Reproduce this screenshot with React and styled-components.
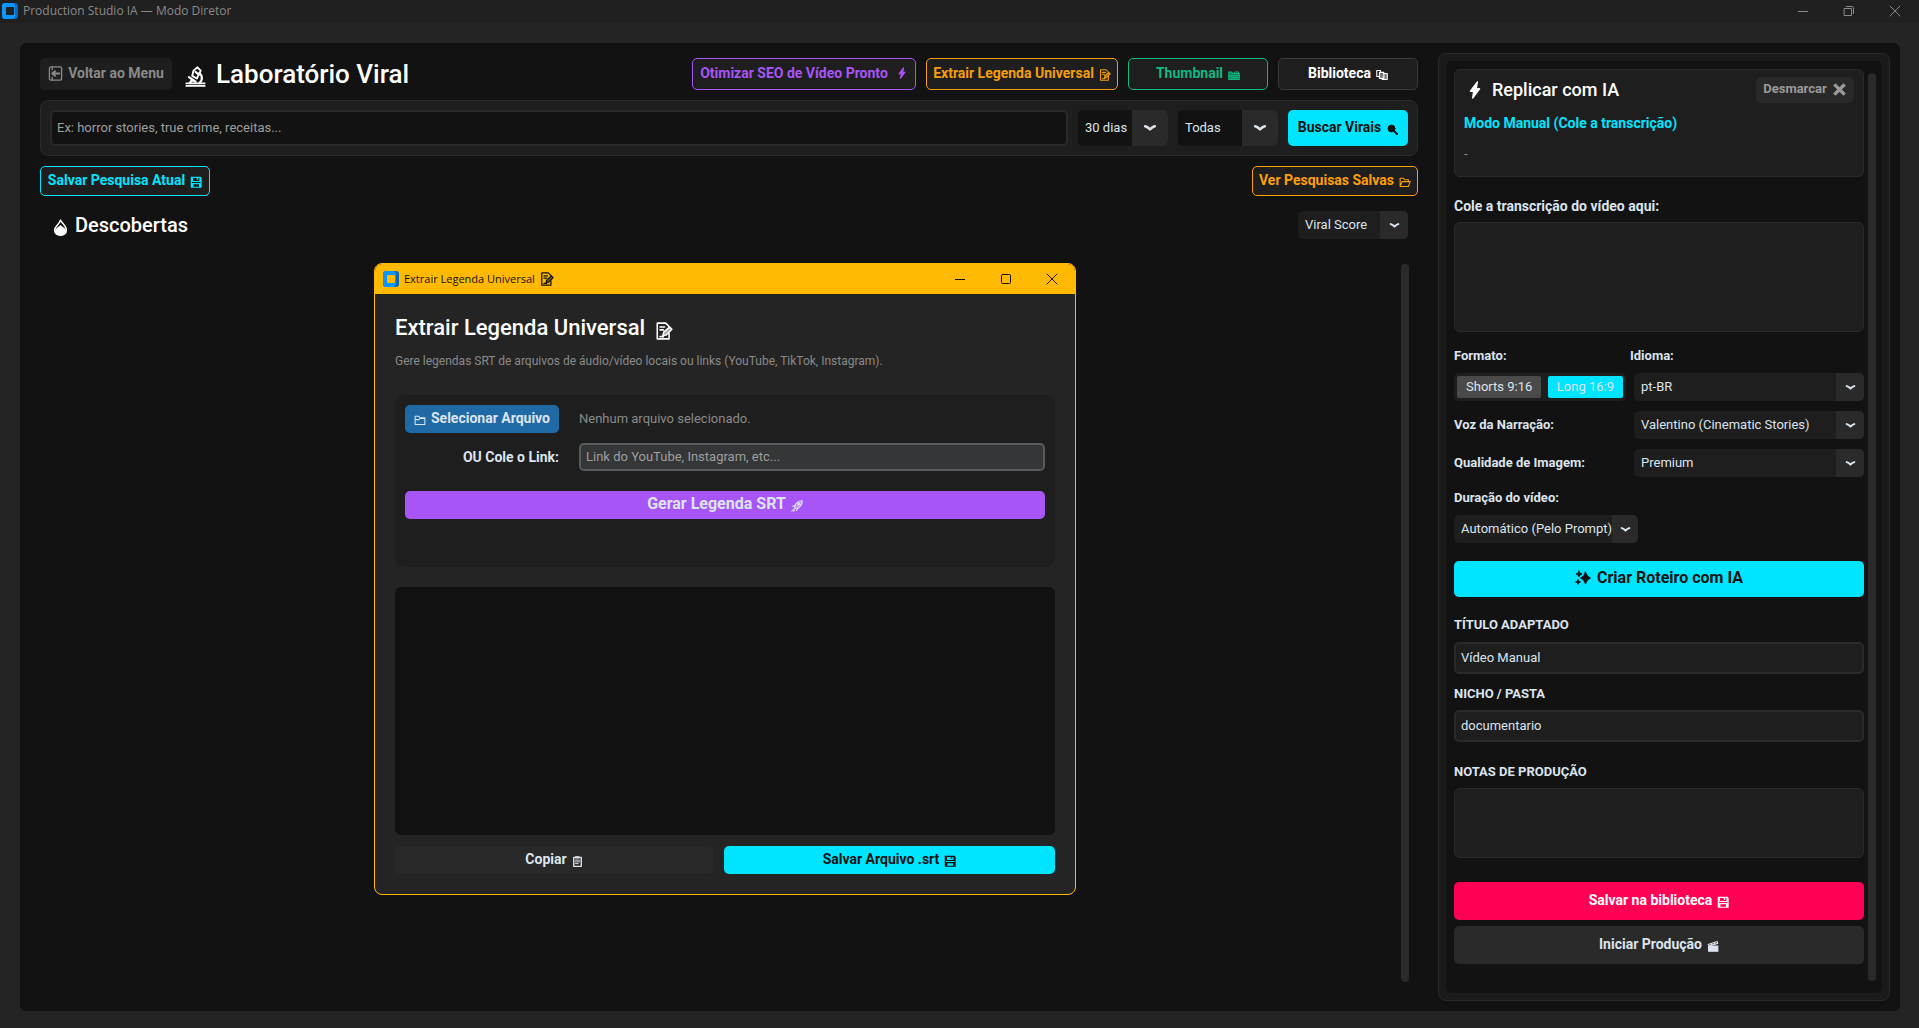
import React from "react";
import styled, { createGlobalStyle } from "styled-components";

const c = {
  cyan: "#00e5ff",
  orange: "#ff9f0a",
  amber: "#f59e0b",
  green: "#10b981",
  purple: "#a855f7",
  pink: "#ff0055",
  yellow: "#ffb900",
  blue: "#1f6aa5",
  page: "#242424",
  base: "#121212",
  card: "#1e1e1e",
  line: "#2a2a2a",
  text: "#dce4ee",
  muted: "#8a8a8a",
};

const GlobalStyle = createGlobalStyle`
  *, *::before, *::after { box-sizing: border-box; }
  html, body { margin: 0; background: ${c.page}; }
  body, button, input, select, textarea {
    font-family: Roboto, "Liberation Sans", sans-serif;
    font-size: 13px;
    line-height: 16px;
    color: ${c.text};
  }
  button { cursor: pointer; }
`;

/* ---------- icons ---------- */

const Glyph = styled.svg`
  flex: none;
  display: block;
  width: ${(p) => p.$size || 12}px;
  height: ${(p) => p.$size || 12}px;
  margin-top: ${(p) => p.$drop || 0}px;
  fill: none;
  stroke: currentColor;
  stroke-width: 1.4;
  stroke-linecap: round;
  stroke-linejoin: round;
`;

const shapes = {
  back: (
    <>
      <rect x="1.500" y="1" width="13" height="14" rx="1.500" />
      <path d="M12 8H4.500M7.500 5.500L4.500 8L7.500 10.500" strokeWidth="2" />
      <path d="M4.500 1v3M4.500 12v3" />
    </>
  ),
  microscope: (
    <>
      <path d="M1 15.200h14M1 13.200h14" />
      <path d="M6.500 3.500L9.500 1l2.500 2.500L9 9.500L5.500 7.500Z" />
      <path d="M8 4.500l2.500 2M11 5.500c2.500 2 2.500 5.500 0 7.500M3 8.500l5 3.500M4 13c0-2 3-2.500 4-1" strokeWidth="1.700" />
    </>
  ),
  fire: (
    <>
      <path d="M8 1C9 4 13.500 6 13.500 10.500C13.500 13.500 11 15.200 8 15.200S2.500 13.500 2.500 10.500C2.500 7 7 5 8 1Z" />
      <path d="M8 6.500C10 8.500 12.500 9 12.500 11.500C12.500 14 10 14.800 8 14.800S3.500 14 3.500 11.500C3.500 9 6 8.500 8 6.500Z" fill="currentColor" />
    </>
  ),
  bolt: <path d="M10 1L4 9H7L6 15L12 7H9Z" fill="currentColor" />,
  memo: (
    <>
      <path d="M12.500 10v5H2V1h7.500l3 3v1" />
      <path d="M4.500 4.500h4M4.500 7h3M4.500 13h3" />
      <path d="M7 12l.8-3L13 4.500l2 2L10 11.500Z" fill="currentColor" fillOpacity=".6" />
    </>
  ),
  dividers: (
    <>
      <path d="M1 14V4h4l1.500 2H15v8Z" fill="currentColor" fillOpacity=".65" />
      <path d="M8 6l1.500-2h4.500v2M1 9h14M4 11.500h8" />
    </>
  ),
  books: (
    <>
      <path d="M1 2h5v2M1 2v8h2.500" />
      <path d="M4.500 4.500h6v8h-6Z" fill="currentColor" fillOpacity=".4" />
      <path d="M10.500 6H15v8H8" fill="currentColor" fillOpacity=".4" />
    </>
  ),
  search: (
    <>
      <circle cx="6.500" cy="6.500" r="5" fill="currentColor" />
      <path d="M10 10l4.500 4.500" strokeWidth="3" />
    </>
  ),
  openFolder: <path d="M1.500 14V3h4.500l1.500 2h5v2.500M1.500 14L4 7.500h11L12.500 14Z" />,
  folder: <path d="M1.500 14V3h5l1.500 2h6.500v9ZM1.500 7.500h5l1.500-1.500h6.500" />,
  floppy: (
    <path
      d="M1 1h13l1.500 1.500v13H1ZM4 2.500v4h8.500v-4h-1.500v2.500h-2v-2.500ZM2.500 8v1.200h11.500V8ZM4.500 11v3.200h7.500V11Z"
      fill="currentColor"
      fillRule="evenodd"
      stroke="none"
    />
  ),
  rocket: (
    <>
      <path d="M15 1C10 1 6 4 4.500 9.500L7 12C12 10 15 6 15 1Z" fill="currentColor" fillOpacity=".45" />
      <path d="M5 7L2 8.500M9 11l-1.500 3M1 15l3.500-3.500M3.500 15l1.500-1.500" />
      <circle cx="10.500" cy="5.500" r="1.200" />
    </>
  ),
  clipboard: (
    <>
      <rect x="2.500" y="2" width="11" height="13" strokeWidth="2" />
      <path d="M5.500 1h5v2h-5ZM5 6h6M5 8.500h6M5 11h4" />
    </>
  ),
  sparkles: (
    <g fill="currentColor" strokeWidth=".8">
      <path d="M10.500 2L12.500 6L15.500 8L12.500 10L10.500 14L8.500 10L5.500 8L8.500 6Z" />
      <path d="M4 1l1 2L7 4l-2 1L4 7l-1-2L1 4l2-1Z" />
      <path d="M3 9.500l.8 1.700 1.700.8-1.700.8L3 14.500l-.8-1.700L.5 12l1.700-.8Z" />
    </g>
  ),
  clapper: (
    <>
      <path d="M2 8h12.500v7H2Z" fill="currentColor" />
      <path d="M1.500 6L13.500 2l.8 2.500L2 8" />
      <path d="M5 5l1.500 1.500M9 3.500l1.500 1.500" />
    </>
  ),
  cross: <path d="M2.500 2.500l11 11M13.500 2.500L2.500 13.500" strokeWidth="3.600" strokeLinecap="butt" />,
  chevron: <path d="M2.500 6Q5.500 7 8 9.500Q10.500 7 13.500 6" strokeWidth="3" />,
  minimize: <path d="M3 8.500h10" strokeLinecap="butt" />,
  maximize: <rect x="3.500" y="3.500" width="9" height="9" rx="1" />,
  restore: <path d="M3.500 5.500h7v7h-7ZM5.500 3.500h6q1 0 1 1v6" />,
  close: <path d="M3 3l10 10M13 3L3 13" />,
};

const Icon = ({ name, size, drop }) => (
  <Glyph viewBox="0 0 16 16" aria-hidden="true" $size={size} $drop={drop}>
    {shapes[name]}
  </Glyph>
);

const Logo = ({ size, hole }) => (
  <svg width={size} height={size} viewBox="0 0 16 16" aria-hidden="true">
    <rect width="16" height="16" rx="3" fill="#0a66b8" />
    <rect width="13" height="16" rx="3" fill="#0a95ff" />
    <rect x="4" y="4" width="8" height="8" rx="1" fill={hole} />
  </svg>
);

/* ---------- shared parts ---------- */

const Button = styled.button`
  display: flex;
  align-items: center;
  justify-content: center;
  gap: ${(p) => p.$gap || 5}px;
  height: ${(p) => p.$h || 28}px;
  min-width: ${(p) => (p.$w ? `${p.$w}px` : "0")};
  padding: 0 5px 2px;
  border: ${(p) => (p.$line ? `1px solid ${p.$line}` : "0")};
  border-radius: 5px;
  background: ${(p) => p.$bg || c.card};
  color: ${(p) => p.$color || c.text};
  font-size: ${(p) => p.$font || 14}px;
  font-weight: 700;
  white-space: nowrap;
`;

const WindowButton = styled.button`
  display: grid;
  place-items: center;
  width: 46px;
  height: 100%;
  padding: 0;
  border: 0;
  background: none;
  color: inherit;
  svg { stroke-width: 1; }
`;

const WindowButtons = styled.div`
  display: flex;
  height: 100%;
  margin-left: auto;
`;

const SelectBox = styled.div`
  display: grid;
  grid-template-columns: minmax(0, 1fr) ${(p) => p.$arrow || 28}px;
  width: ${(p) => (p.$w ? `${p.$w}px` : "100%")};
  height: ${(p) => p.$h || 28}px;
  border-radius: 5px;
  background: ${(p) => p.$bg || c.card};
  overflow: hidden;
`;

const NativeSelect = styled.select`
  grid-area: 1 / 1 / 2 / 3;
  appearance: none;
  width: 100%;
  padding: 0 20px 0 7px;
  border: 0;
  background: none;
  font-size: 13px;
  option { background: ${c.card}; }
`;

const SelectArrow = styled.span`
  grid-area: 1 / 2 / 2 / 3;
  display: grid;
  place-items: center;
  background: ${c.line};
  pointer-events: none;
`;

const Select = ({ id, label, value, ...box }) => (
  <SelectBox {...box}>
    <NativeSelect id={id} aria-label={label} defaultValue={value}>
      <option>{value}</option>
    </NativeSelect>
    <SelectArrow>
      <Icon name="chevron" size={box.$h > 30 ? 14 : 11} />
    </SelectArrow>
  </SelectBox>
);

const Input = styled.input`
  width: 100%;
  min-width: 0;
  height: ${(p) => p.$h || 32}px;
  padding: 0 5px 1px;
  border: 2px solid ${(p) => p.$line || c.line};
  border-radius: 5px;
  background: ${(p) => p.$bg || c.card};
  color: ${c.text};
  font-size: 13px;
  &::placeholder { color: #9e9e9e; opacity: 1; }
`;

const TextArea = styled.textarea`
  display: block;
  width: 100%;
  height: ${(p) => p.$h}px;
  padding: 6px;
  border: 1px solid ${(p) => p.$line || c.line};
  border-radius: 6px;
  background: ${(p) => p.$bg || c.card};
  resize: none;
`;

const ScrollTrack = styled.div`
  width: 8px;
  border-radius: 4px;
  background: ${c.line};
`;

/* ---------- main window ---------- */

const Shell = styled.div`
  display: flex;
  flex-direction: column;
  min-height: 100vh;
`;

const TitleBar = styled.header`
  display: flex;
  align-items: center;
  gap: 5px;
  height: 23px;
  padding: 0 1px 1px 2px;
  background: #202020;
  color: #8a8a8a;
  font-family: "Open Sans", "Noto Sans", sans-serif;
  font-size: 12px;
`;

const Frame = styled.div`
  flex: 1;
  display: grid;
  grid-template-columns: minmax(0, 1fr) 452px;
  gap: 20px;
  margin: 20px 19px 17px 20px;
  padding: 10px 10px 10px 20px;
  border-radius: 6px;
  background: ${c.base};
`;

const Lab = styled.main`
  display: flex;
  flex-direction: column;
  gap: 10px;
  padding-top: 5px;
`;

const Row = styled.div`
  display: flex;
  align-items: center;
  gap: 10px;
`;

const Heading = styled.h1`
  display: flex;
  align-items: center;
  gap: ${(p) => p.$gap || 10}px;
  margin: 0;
  color: #fff;
  font-size: ${(p) => p.$font || 26}px;
  font-weight: 500;
  line-height: 28px;
  white-space: nowrap;
`;

const PageTitle = styled(Heading)`
  padding-left: 3px;
`;

const HeadActions = styled(Row)`
  margin-left: auto;
`;

const SearchBar = styled.form`
  display: flex;
  gap: 10px;
  padding: 9px;
  border: 1px solid ${c.line};
  border-radius: 8px;
  background: ${c.card};
`;

const Between = styled(Row)`
  justify-content: space-between;
`;

const Discoveries = styled(Between)`
  padding: 5px 10px 0 12px;
`;

const Results = styled.section`
  flex: 1;
  display: flex;
  justify-content: flex-end;
  padding: 15px 9px 19px 0;
`;

/* ---------- side panel ---------- */

const Side = styled.aside`
  padding: 7px;
  border: 1px solid ${c.line};
  border-radius: 8px;
  background: #1a1a1a;
`;

const SideInner = styled.div`
  display: flex;
  gap: 4px;
  height: 100%;
  padding: 8px 6px 12px 8px;
  border-radius: 6px;
  background: ${c.base};
`;

const SideTrack = styled(ScrollTrack)`
  margin-top: 4px;
`;

const Fields = styled.div`
  flex: 1;
  min-width: 0;
`;

const ModeCard = styled.section`
  height: 108px;
  padding: 6px 9px;
  border: 1px solid ${c.line};
  border-radius: 6px;
  background: ${c.card};
`;

const ModeTitle = styled(Heading)`
  padding-left: 2px;
`;

const ModeName = styled.p`
  margin: 11px 0 15px;
  color: ${c.cyan};
  font-size: 14px;
  font-weight: 700;
`;

const ModeNote = styled.p`
  margin: 0;
  color: ${c.muted};
`;

const Label = styled.label`
  display: block;
  margin-top: ${(p) => p.$top || 0}px;
  margin-bottom: ${(p) => p.$bottom || 0}px;
  font-size: ${(p) => p.$font || 13}px;
  font-weight: 700;
`;

const FormatGrid = styled.div`
  display: grid;
  grid-template-columns: 172px minmax(0, 1fr);
  grid-template-rows: 14px;
  column-gap: 8px;
  row-gap: 10px;
  align-items: center;
  margin-top: 17px;
`;

const LanguageLabel = styled(Label)`
  margin-left: -4px;
`;

const Segments = styled.div`
  display: flex;
  justify-content: space-between;
  padding: 3px;
  border-radius: 5px;
  background: ${c.card};
`;

const Segment = styled.button`
  height: 22px;
  padding: 0 9px;
  border: 0;
  border-radius: 2px;
  background: ${(p) => (p.$on ? c.cyan : "#4a4a4a")};
`;

const Stack = styled.div`
  display: grid;
  gap: 6px;
  margin-top: ${(p) => p.$top || 0}px;
`;

/* ---------- caption dialog ---------- */

const Dialog = styled.section`
  position: absolute;
  top: 263px;
  left: 374px;
  width: 702px;
  border: 1px solid ${c.yellow};
  border-radius: 8px;
  background: ${c.page};
  overflow: hidden;
`;

const DialogBar = styled.header`
  display: flex;
  align-items: center;
  gap: 5px;
  height: 30px;
  padding: 0 0 1px 8px;
  background: ${c.yellow};
  color: #111;
  font-family: "Open Sans", "Noto Sans", sans-serif;
  font-size: 11px;
`;

const DialogBody = styled.div`
  padding: 20px;
`;

const Hint = styled.p`
  margin: ${(p) => p.$m || "0"};
  color: ${c.muted};
  font-size: ${(p) => p.$font || 13}px;
`;

const SourcePanel = styled.div`
  display: grid;
  grid-template-columns: 154px minmax(0, 1fr);
  column-gap: 20px;
  row-gap: 10px;
  align-items: center;
  height: 172px;
  align-content: start;
  padding: 10px;
  margin-bottom: 20px;
  border-radius: 10px;
  background: ${c.card};
`;

const LinkLabel = styled(Label)`
  text-align: right;
`;

const Wide = styled.div`
  display: grid;
  grid-column: 1 / -1;
  margin-top: 10px;
`;

const DialogActions = styled.div`
  display: grid;
  grid-template-columns: 318px minmax(0, 1fr);
  gap: 11px;
  margin-top: 11px;
`;

function SidePanel() {
  return (
    <Side>
      <SideInner>
        <Fields>
          <ModeCard>
            <Between>
              <ModeTitle as="h2" $font={18} $gap={8}>
                <Icon name="bolt" size={18} /> Replicar com IA
              </ModeTitle>
              <Button $h={26} $font={13} $w={98} $bg="#292929" $color="#9a9a9a">
                Desmarcar <Icon name="cross" size={15} />
              </Button>
            </Between>
            <ModeName>Modo Manual (Cole a transcrição)</ModeName>
            <ModeNote>-</ModeNote>
          </ModeCard>

          <Label htmlFor="transcript" $font={14} $top={21} $bottom={8}>Cole a transcrição do vídeo aqui:</Label>
          <TextArea id="transcript" $h={110} />

          <FormatGrid>
            <Label as="span">Formato:</Label>
            <LanguageLabel htmlFor="language">Idioma:</LanguageLabel>
            <Segments>
              <Segment type="button">Shorts 9:16</Segment>
              <Segment type="button" $on>Long 16:9</Segment>
            </Segments>
            <Select id="language" value="pt-BR" />
            <Label htmlFor="voice">Voz da Narração:</Label>
            <Select id="voice" value="Valentino (Cinematic Stories)" />
            <Label htmlFor="quality">Qualidade de Imagem:</Label>
            <Select id="quality" value="Premium" />
          </FormatGrid>

          <Label htmlFor="duration" $top={13} $bottom={9}>Duração do vídeo:</Label>
          <Select id="duration" value="Automático (Pelo Prompt)" $w={184} $arrow={26} />

          <Stack $top={18}>
            <Button $h={36} $bg={c.cyan} $color={c.base} $font={16} $gap={6}>
              <Icon name="sparkles" size={16} /> Criar Roteiro com IA
            </Button>
          </Stack>

          <Label htmlFor="title" $top={20} $bottom={9}>TÍTULO ADAPTADO</Label>
          <Input id="title" defaultValue="Vídeo Manual" />
          <Label htmlFor="niche" $top={12} $bottom={8}>NICHO / PASTA</Label>
          <Input id="niche" defaultValue="documentario" />
          <Label htmlFor="notes" $top={22} $bottom={8}>NOTAS DE PRODUÇÃO</Label>
          <TextArea id="notes" $h={70} />

          <Stack $top={24}>
            <Button $h={38} $bg={c.pink} $color="#fff">
              Salvar na biblioteca <Icon name="floppy" drop={4} />
            </Button>
            <Button $h={38} $bg={c.line}>
              Iniciar Produção <Icon name="clapper" drop={4} />
            </Button>
          </Stack>
        </Fields>
        <SideTrack />
      </SideInner>
    </Side>
  );
}

function CaptionDialog() {
  return (
    <Dialog role="dialog" aria-label="Extrair Legenda Universal">
      <DialogBar>
        <Logo size={16} hole={c.yellow} />
        Extrair Legenda Universal
        <Icon name="memo" size={14} />
        <WindowButtons>
          <WindowButton aria-label="Minimizar"><Icon name="minimize" size={16} /></WindowButton>
          <WindowButton aria-label="Maximizar"><Icon name="maximize" size={16} /></WindowButton>
          <WindowButton aria-label="Fechar"><Icon name="close" size={16} /></WindowButton>
        </WindowButtons>
      </DialogBar>
      <DialogBody>
        <Heading as="h2" $font={22}>
          Extrair Legenda Universal <Icon name="memo" size={18} drop={5} />
        </Heading>
        <Hint $m="11px 0 26px" $font={12}>
          Gere legendas SRT de arquivos de áudio/vídeo locais ou links (YouTube, TikTok, Instagram).
        </Hint>
        <SourcePanel>
          <Button $bg={c.blue}>
            <Icon name="folder" drop={4} /> Selecionar Arquivo
          </Button>
          <Hint>Nenhum arquivo selecionado.</Hint>
          <LinkLabel htmlFor="link" $font={14}>OU Cole o Link:</LinkLabel>
          <Input id="link" $h={28} $bg="#343638" $line="#565b5e" placeholder="Link do YouTube, Instagram, etc..." />
          <Wide>
            <Button $bg={c.purple} $font={16}>
              Gerar Legenda SRT <Icon name="rocket" drop={4} />
            </Button>
          </Wide>
        </SourcePanel>
        <TextArea aria-label="Legenda gerada" $h={248} $bg={c.base} $line={c.base} />
        <DialogActions>
          <Button $bg="#292929">
            Copiar <Icon name="clipboard" size={11} drop={4} />
          </Button>
          <Button $bg={c.cyan} $color={c.base}>
            Salvar Arquivo .srt <Icon name="floppy" drop={4} />
          </Button>
        </DialogActions>
      </DialogBody>
    </Dialog>
  );
}

export default function App() {
  return (
    <Shell>
      <GlobalStyle />
      <TitleBar>
        <Logo size={16} hole="#202020" />
        Production Studio IA — Modo Diretor
        <WindowButtons>
          <WindowButton aria-label="Minimizar"><Icon name="minimize" size={16} /></WindowButton>
          <WindowButton aria-label="Restaurar"><Icon name="restore" size={16} /></WindowButton>
          <WindowButton aria-label="Fechar"><Icon name="close" size={16} /></WindowButton>
        </WindowButtons>
      </TitleBar>

      <Frame>
        <Lab>
          <Row>
            <Button $h={32} $w={132} $color={c.muted}>
              <Icon name="back" size={15} /> Voltar ao Menu
            </Button>
            <PageTitle>
              <Icon name="microscope" size={21} drop={4} /> Laboratório Viral
            </PageTitle>
            <HeadActions>
              <Button $h={32} $w={224} $line={c.purple} $color={c.purple} $gap={8}>
                Otimizar SEO de Vídeo Pronto <Icon name="bolt" />
              </Button>
              <Button $h={32} $w={192} $line={c.amber} $color={c.amber}>
                Extrair Legenda Universal <Icon name="memo" drop={3} />
              </Button>
              <Button $h={32} $w={140} $line={c.green} $color={c.green}>
                Thumbnail <Icon name="dividers" drop={4} />
              </Button>
              <Button $h={32} $w={140} $line="#3a3a3a" $color="#fff">
                Biblioteca <Icon name="books" drop={4} />
              </Button>
            </HeadActions>
          </Row>

          <SearchBar>
            <Input $h={36} $bg={c.base} aria-label="Buscar nicho" placeholder="Ex: horror stories, true crime, receitas..." />
            <Row>
              <Select label="Período" value="30 dias" $w={90} $h={36} $arrow={36} $bg={c.base} />
              <Select label="Categoria" value="Todas" $w={100} $h={36} $arrow={36} $bg={c.base} />
              <Button type="button" $h={36} $w={120} $bg={c.cyan} $color={c.base} $gap={6}>
                Buscar Virais <Icon name="search" size={11} drop={4} />
              </Button>
            </Row>
          </SearchBar>

          <Between>
            <Button $h={30} $w={170} $line={c.cyan} $color={c.cyan}>
              Salvar Pesquisa Atual <Icon name="floppy" drop={3} />
            </Button>
            <Button $h={30} $w={166} $line={c.orange} $color={c.orange}>
              Ver Pesquisas Salvas <Icon name="openFolder" drop={3} />
            </Button>
          </Between>

          <Discoveries>
            <Heading as="h2" $font={20} $gap={6}>
              <Icon name="fire" size={17} drop={4} /> Descobertas
            </Heading>
            <Select label="Ordenar por" value="Viral Score" $w={110} />
          </Discoveries>

          <Results>
            <ScrollTrack />
          </Results>
        </Lab>
        <SidePanel />
      </Frame>
      <CaptionDialog />
    </Shell>
  );
}
